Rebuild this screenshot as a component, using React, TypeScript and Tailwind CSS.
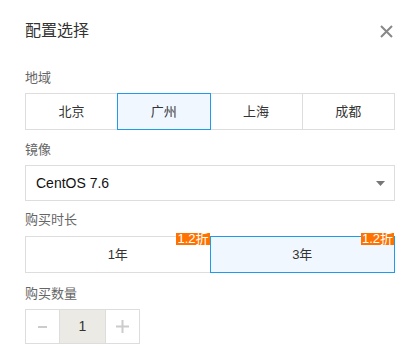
import React, { useState } from 'react';

const FONT = { fontFamily: '"Liberation Sans", "Noto Sans CJK SC", sans-serif' };

export default function App() {
  const [region, setRegion] = useState('广州');
  const [term, setTerm] = useState('3年');
  const [count, setCount] = useState(1);

  const regions = ['北京', '广州', '上海', '成都'];
  const terms = ['1年', '3年'];

  return (
    <div className="w-[420px] h-[358px] bg-white px-[25px] pt-[19px]" style={FONT}>
      {/* Header */}
      <div className="flex items-center justify-between h-6">
        <h2 className="text-[16px] leading-6 text-[#333]">配置选择</h2>
        <button className="w-4 h-4 flex items-center justify-center mr-[1px]">
          <svg width="13" height="13" viewBox="0 0 13 13">
            <path d="M1 1 L12 12 M12 1 L1 12" stroke="#888" strokeWidth="2" />
          </svg>
        </button>
      </div>

      {/* Region */}
      <p className="mt-[27px] text-[13px] leading-4 text-[#666]">地域</p>
      <div className="mt-[7px] flex h-[37px]">
        {regions.map((r, i) => (
          <button
            key={r}
            onClick={() => setRegion(r)}
            className={`flex-1 flex items-center justify-center text-[13px] text-[#333] border ${i > 0 ? '-ml-px' : ''} ${
              region === r ? 'relative z-10 border-[#1f9bea] bg-[#f0f7ff]' : 'border-[#ddd] bg-white'
            }`}
          >
            {r}
          </button>
        ))}
      </div>

      {/* Image */}
      <p className="mt-[12px] text-[13px] leading-4 text-[#666]">镜像</p>
      <div className="mt-[7px] h-[36px] border border-[#ddd] flex items-center justify-between pl-[10px] pr-[9px]">
        <span className="text-[14px] text-[#111]">CentOS 7.6</span>
        <svg width="9" height="5" viewBox="0 0 9 5">
          <path d="M0 0 H9 L4.5 5 Z" fill="#777" />
        </svg>
      </div>

      {/* Duration */}
      <p className="mt-[11px] text-[13px] leading-4 text-[#666]">购买时长</p>
      <div className="mt-[8px] flex h-[37px]">
        {terms.map((t, i) => (
          <button
            key={t}
            onClick={() => setTerm(t)}
            className={`relative flex-1 flex items-center justify-center text-[13px] text-[#333] border ${i > 0 ? '-ml-px' : ''} ${
              term === t ? 'z-10 border-[#1f9bea] bg-[#f0f7ff]' : 'border-[#ddd] bg-white'
            }`}
          >
            <span className="absolute -top-[4px] right-0 h-3 px-[1px] bg-[#ff7200] text-white text-[13px] leading-3">
              1.2折
            </span>
            {t}
          </button>
        ))}
      </div>

      {/* Quantity */}
      <p className="mt-[13px] text-[13px] leading-4 text-[#666]">购买数量</p>
      <div className="mt-[7px] flex h-[35px] w-[115px] border border-[#ddd]">
        <button
          onClick={() => setCount(Math.max(1, count - 1))}
          className="w-[33px] flex items-center justify-center"
        >
          <svg width="9" height="2" viewBox="0 0 9 2">
            <path d="M0 1 H9" stroke="#ccc" strokeWidth="2" />
          </svg>
        </button>
        <div className="w-[47px] flex items-center justify-center bg-[#ebeae4] border-x border-[#ddd] text-[14px] text-[#333]">
          {count}
        </div>
        <button
          onClick={() => setCount(count + 1)}
          className="flex-1 flex items-center justify-center"
        >
          <svg width="13" height="13" viewBox="0 0 13 13">
            <path d="M6.5 0 V13 M0 6.5 H13" stroke="#ccc" strokeWidth="2" />
          </svg>
        </button>
      </div>
    </div>
  );
}
